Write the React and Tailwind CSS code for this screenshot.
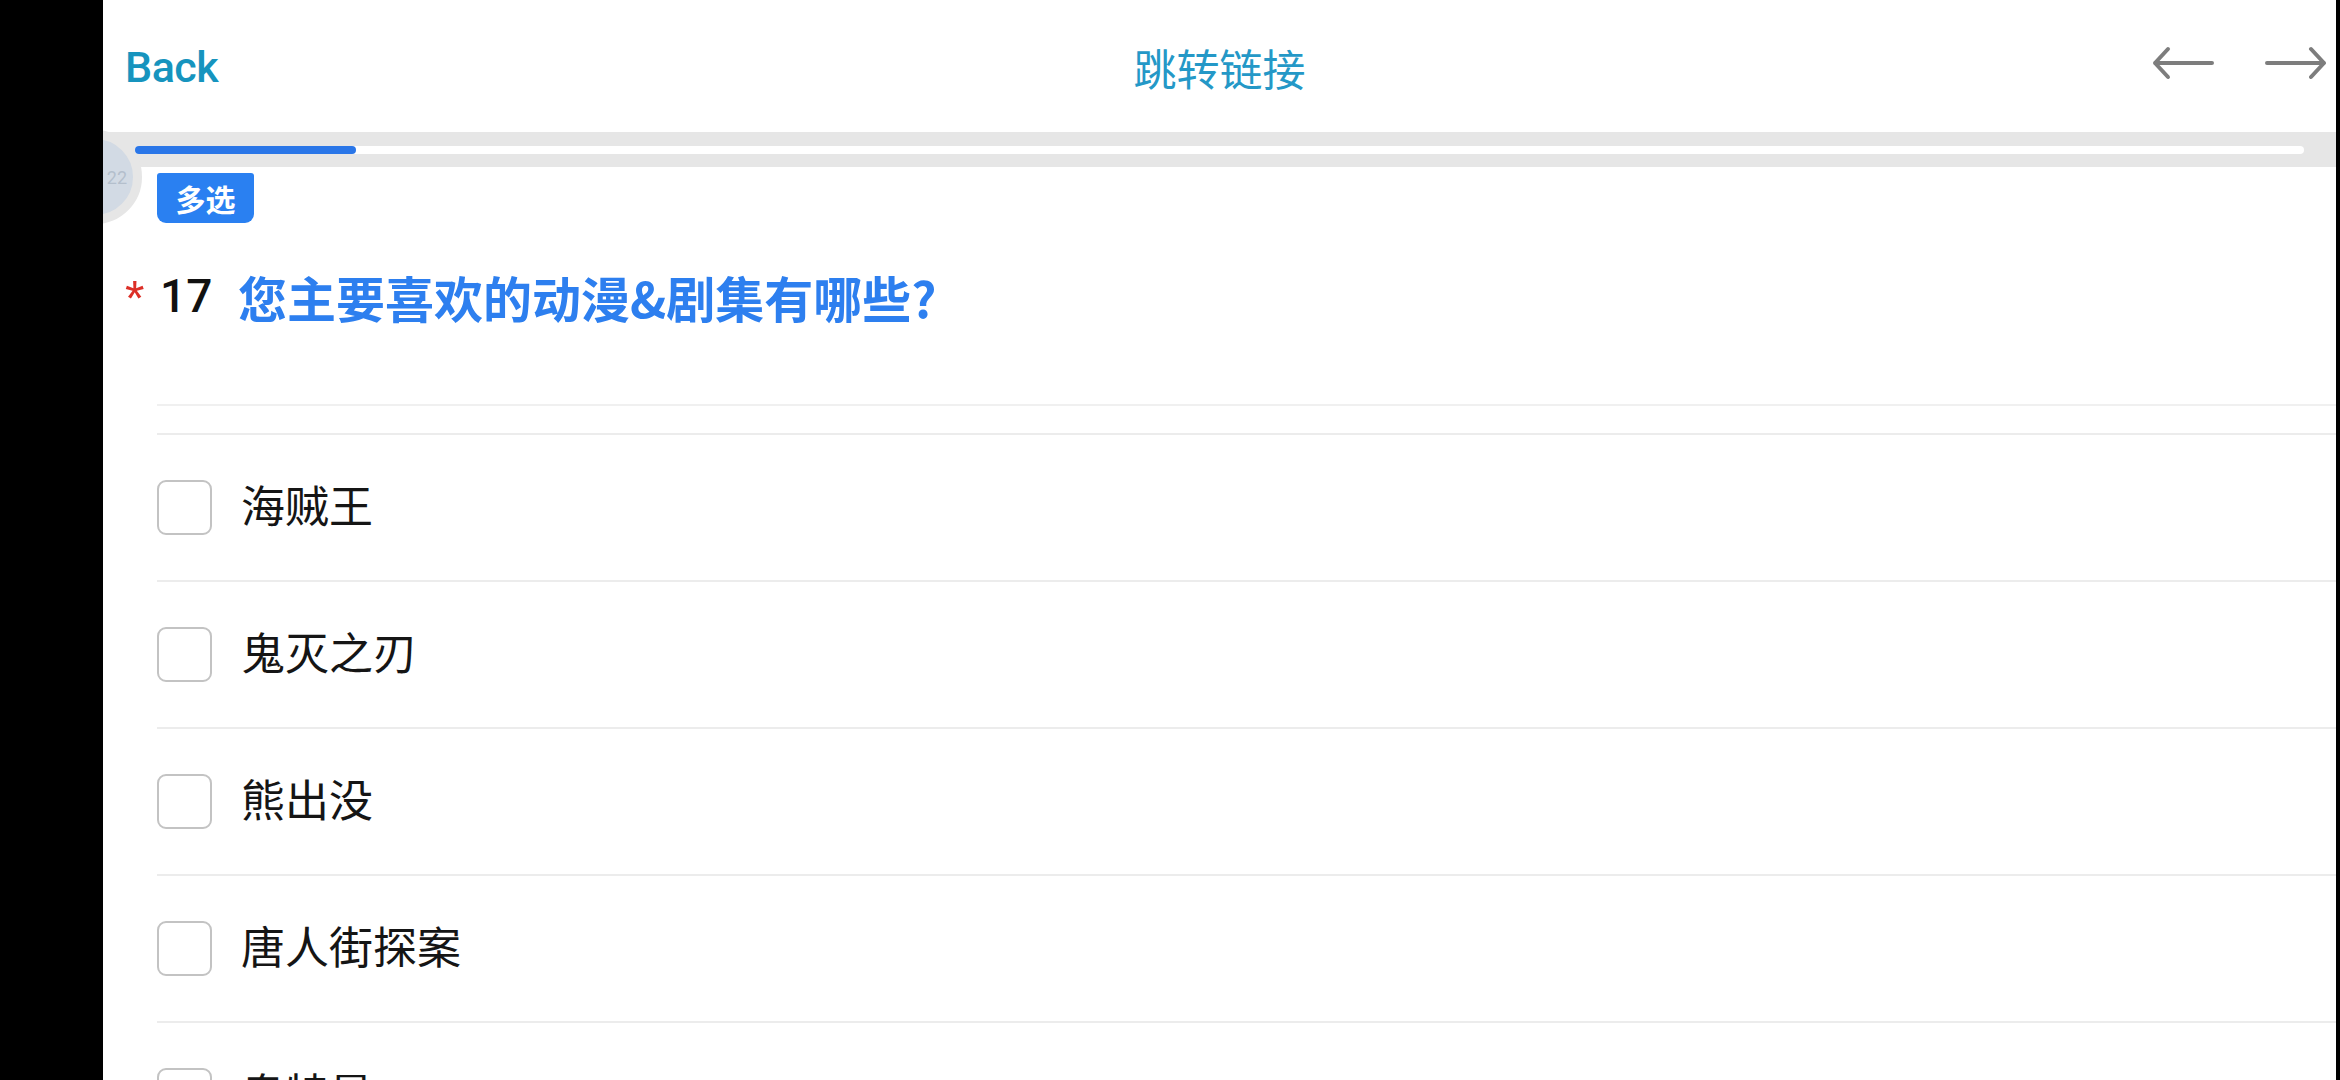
import React from 'react';

const options = ['海贼王', '鬼灭之刃', '熊出没', '唐人街探案', '奥特曼'];

const Arrow = ({ dir }) => (
  <svg width="62" height="34" viewBox="0 0 62 34" fill="none" stroke="#7d7d7d" strokeWidth="4" strokeLinecap="round" strokeLinejoin="round">
    {dir === 'left' ? (
      <path d="M60 17 H3 M16 3 L3 17 L16 31" />
    ) : (
      <path d="M2 17 H59 M46 3 L59 17 L46 31" />
    )}
  </svg>
);

const App = () => {
  return (
    <div className="relative flex w-[2340px] h-[1080px] overflow-hidden bg-black">
      {/* left system bar */}
      <div className="relative z-20 w-[103px] shrink-0 bg-black" />

      {/* floating ball, mostly hidden behind the bar */}
      <div className="absolute left-[48px] top-[130px] z-10 w-[94px] h-[94px] rounded-full border-[9px] border-[#e6e6e6] bg-[#d2dae4] flex items-center justify-end pr-[6px]">
        <span className="text-[18px] text-[#b4bfcc]" style={{ fontFamily: 'Roboto, sans-serif' }}>22</span>
      </div>

      <div className="flex-1 flex flex-col bg-white" style={{ fontFamily: '"Noto Sans CJK SC", "Noto Sans", sans-serif' }}>
        {/* header */}
        <div className="h-[132px] shrink-0 grid grid-cols-[1fr_auto_1fr] items-center">
          <div className="pl-[22px] pt-[2px]">
            <span className="text-[43px] font-medium text-[#1694be] tracking-[-0.5px]" style={{ fontFamily: 'Roboto, sans-serif' }}>Back</span>
          </div>
          <div className="text-[43px] text-[#2498c7] leading-none pt-[2px]">跳转链接</div>
          <div className="flex justify-end items-center gap-[51px] pr-[9px] pb-[6px]">
            <Arrow dir="left" />
            <Arrow dir="right" />
          </div>
        </div>

        {/* progress */}
        <div className="h-[35px] shrink-0 bg-[#e6e6e6] flex items-center px-[32px]">
          <div className="flex-1 h-[8px] rounded-full bg-white">
            <div className="w-[221px] h-full rounded-full bg-[#2a76e8]" />
          </div>
        </div>

        {/* body */}
        <div className="flex-1 pl-[54px]">
          <div className="mt-[6px] w-[97px] h-[50px] rounded-[3px] rounded-b-[9px] bg-[#2a80f1] flex items-center justify-center">
            <span className="text-[30px] font-bold text-white leading-none">多选</span>
          </div>

          <div className="mt-[43px] h-[60px] -ml-[32px] flex items-center">
            <span className="text-[50px] text-[#dc2f27] leading-none w-[35px] mt-[6px]" style={{ fontFamily: '"Liberation Sans", sans-serif' }}>*</span>
            <span className="text-[46px] font-medium text-[#111] leading-none w-[78px]" style={{ fontFamily: 'Roboto, sans-serif' }}>17</span>
            <span className="text-[49px] font-bold text-[#2d7fef] leading-none">您主要喜欢的动漫&amp;剧集有哪些?</span>
          </div>

          <div className="mt-[78px] h-[29px] border-t-2 border-[#f0f0f0]" />

          {options.map((o) => (
            <div key={o} className="h-[147px] border-t-2 border-[#ececec] flex items-center">
              <div className="w-[55px] h-[55px] rounded-[9px] border-2 border-[#c3c3c3] shrink-0" />
              <span className="ml-[29px] mb-[8px] text-[44px] text-[#151515] leading-none">{o}</span>
            </div>
          ))}
        </div>
      </div>

      {/* right edge */}
      <div className="w-[4px] shrink-0 bg-black" />
    </div>
  );
};

export default App;
